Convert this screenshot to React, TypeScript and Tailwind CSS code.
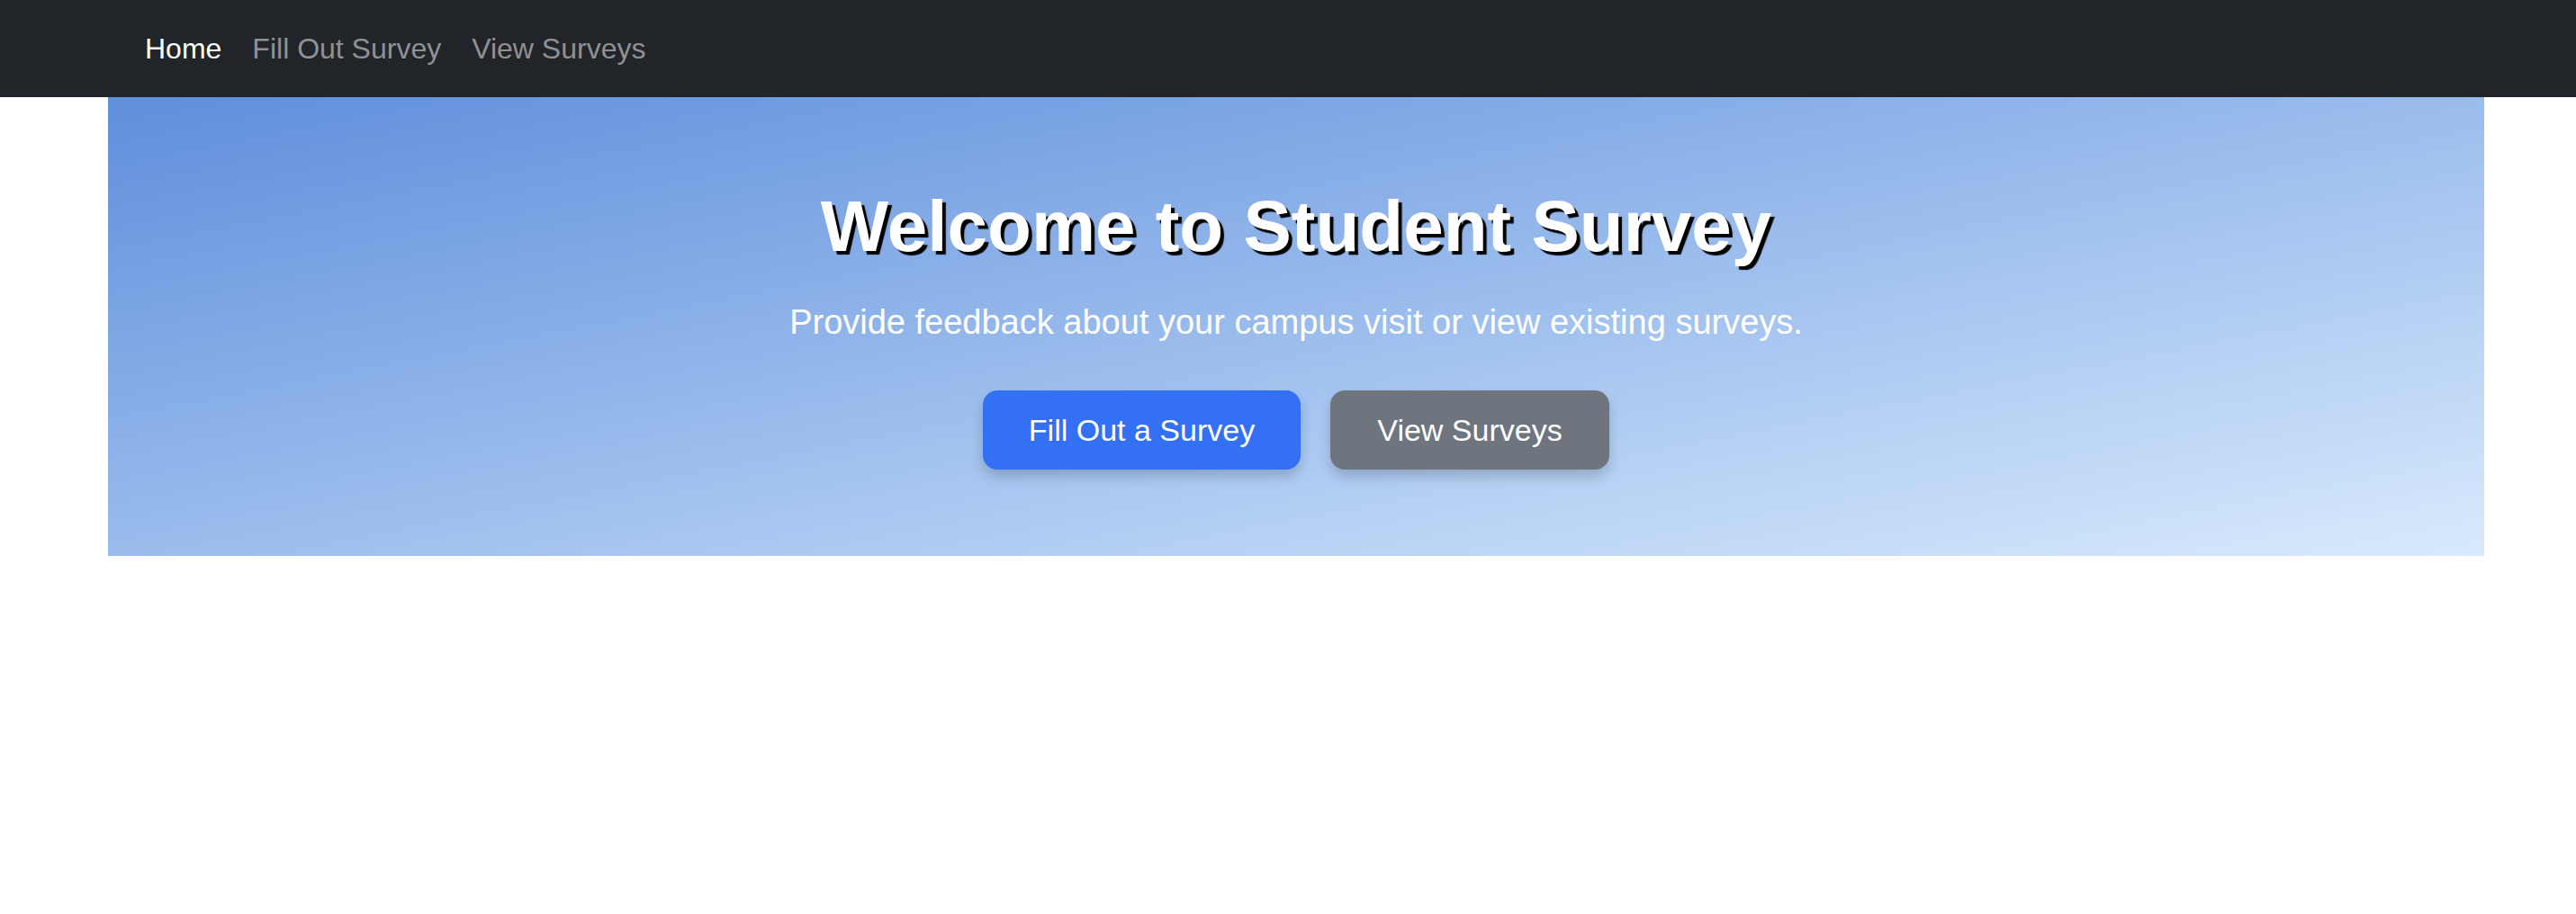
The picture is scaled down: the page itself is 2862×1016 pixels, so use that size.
import React from "react";

// nav link list
const links = [
  { label: "Home", active: true },
  { label: "Fill Out Survey", active: false },
  { label: "View Surveys", active: false },
];

export default function App() {
  return (
    <div className="w-full min-h-screen bg-white font-['Liberation_Sans',Arial,sans-serif]">
      {/* NAVBAR */}
      <nav className="h-[108px] bg-[#212529] flex items-center pl-[161px]">
        <div className="flex items-center gap-[34px]">
          {links.map((l) => (
            <a
              key={l.label}
              href="#"
              className={`text-[32px] leading-none ${l.active ? "text-white" : "text-[#8f9194]"}`}
            >
              {l.label}
            </a>
          ))}
        </div>
      </nav>

      {/* HERO */}
      <div className="ml-[120px] w-[2640px] bg-linear-to-br from-[#5f8edb] to-[#d8eafc] pt-[96px] pb-[96px] flex flex-col items-center text-center">
        <h1 className="text-[80px] leading-[96px] font-bold text-white [text-shadow:4px_4px_1px_#000]">
          Welcome to Student Survey
        </h1>
        <p className="mt-[29px] text-[38px] leading-[58px] text-white">
          Provide feedback about your campus visit or view existing surveys.
        </p>
        <div className="mt-[47px] flex gap-[33px]">
          <button className="h-[88px] w-[353px] rounded-[16px] bg-[#3470f4] text-white text-[34px] shadow-[0_8px_14px_rgba(0,0,0,0.18)]">
            Fill Out a Survey
          </button>
          <button className="h-[88px] w-[310px] rounded-[16px] bg-[#6f757e] text-white text-[34px] shadow-[0_8px_14px_rgba(0,0,0,0.18)]">
            View Surveys
          </button>
        </div>
      </div>
    </div>
  );
}
